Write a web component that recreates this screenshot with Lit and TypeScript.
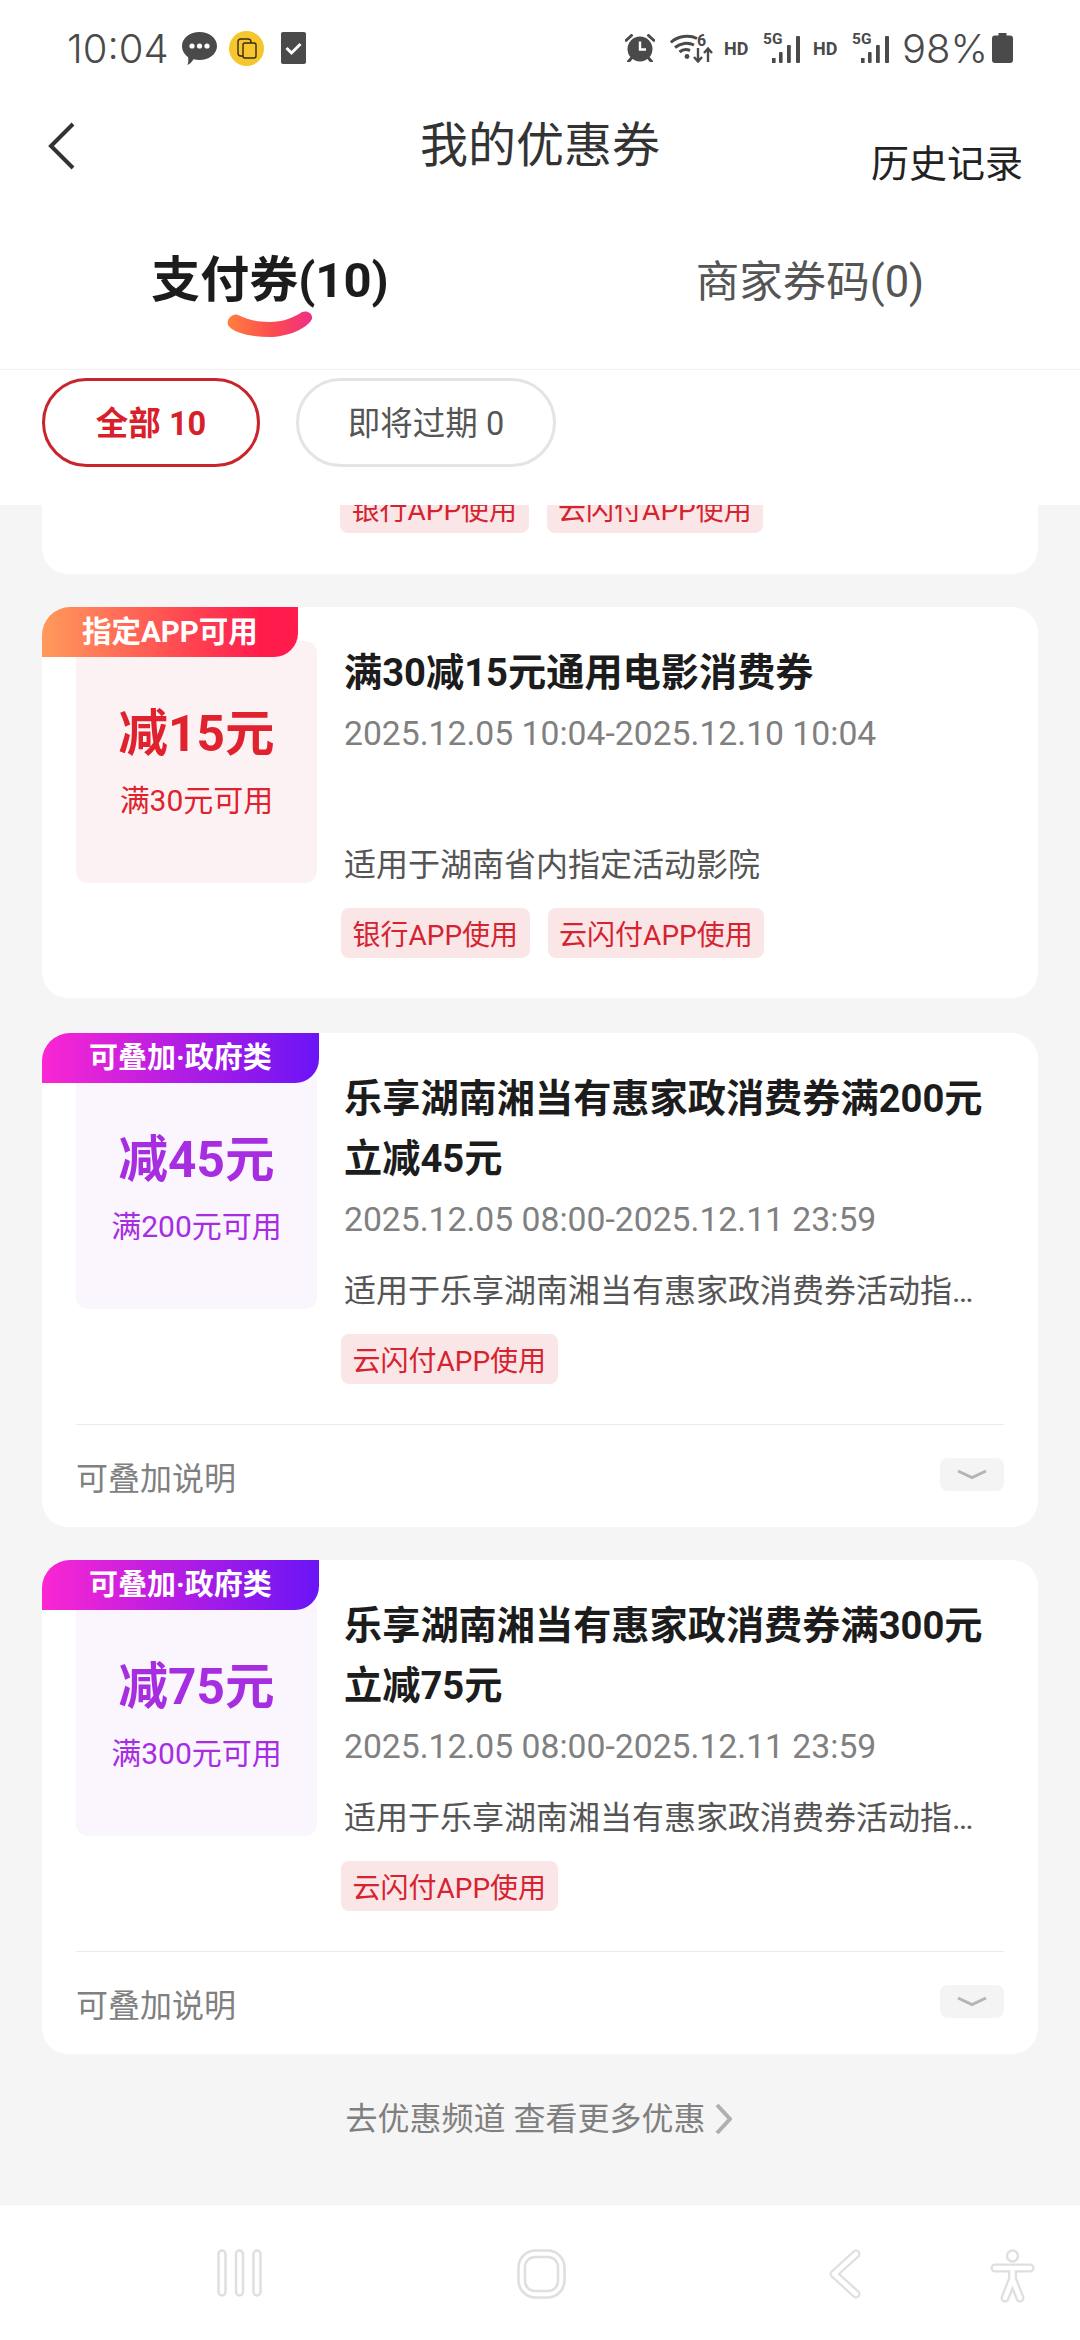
import { LitElement, html, css, svg } from "lit";
import { customElement } from "lit/decorators.js";

interface Coupon {
  badge: string;
  theme: "red" | "purple";
  amount: string;
  cond: string;
  title: string;
  date: string;
  desc: string;
  tags: string[];
  stack: boolean;
}

const DESC_GOV = "适用于乐享湖南湘当有惠家政消费券活动指定商户使用";

const COUPONS: Coupon[] = [
  { badge: "指定APP可用", theme: "red", amount: "减15元", cond: "满30元可用", title: "满30减15元通用电影消费券", date: "2025.12.05 10:04-2025.12.10 10:04", desc: "适用于湖南省内指定活动影院", tags: ["银行APP使用", "云闪付APP使用"], stack: false },
  { badge: "可叠加·政府类", theme: "purple", amount: "减45元", cond: "满200元可用", title: "乐享湖南湘当有惠家政消费券满200元立减45元", date: "2025.12.05 08:00-2025.12.11 23:59", desc: DESC_GOV, tags: ["云闪付APP使用"], stack: true },
  { badge: "可叠加·政府类", theme: "purple", amount: "减75元", cond: "满300元可用", title: "乐享湖南湘当有惠家政消费券满300元立减75元", date: "2025.12.05 08:00-2025.12.11 23:59", desc: DESC_GOV, tags: ["云闪付APP使用"], stack: true },
];

const outline = (d: string) => svg`
  <path d=${d} fill="none" stroke="#dfdfdf" stroke-width="9" stroke-linecap="round" stroke-linejoin="round"/>
  <path d=${d} fill="none" stroke="#fff" stroke-width="4.5" stroke-linecap="round" stroke-linejoin="round"/>`;

const signal = html`<svg class="sig" width="38" height="36" viewBox="0 -6 38 36">
  <text x="0" y="10.500" font-family="Roboto, sans-serif" font-weight="700" font-size="15.500" fill="#4a4a4a">5G</text>
  <rect x="9" y="25" width="3.600" height="5" fill="#4a4a4a"/>
  <rect x="16" y="19" width="3.600" height="11" rx="1" fill="#4a4a4a"/>
  <rect x="24" y="12" width="3.800" height="18" rx="1" fill="#4a4a4a"/>
  <rect x="33" y="3" width="4" height="27" rx="1" fill="#4a4a4a"/>
</svg>`;

@customElement("app-root")
export class AppRoot extends LitElement {
  static styles = css`
    :host {
      display: flex;
      flex-direction: column;
      width: 1080px;
      height: 2340px;
      overflow: hidden;
      background: #fff;
      font-family: Roboto, "Noto Sans CJK SC", sans-serif;
    }
    .status {
      height: 96px;
      flex: none;
      display: flex;
      align-items: center;
      padding: 0 67px 0 67px;
      color: #4a4a4a;
      box-sizing: border-box;
    }
    .time {
      font-family: Inter, Roboto, sans-serif;
      font-size: 40px;
      font-weight: 300;
      width: 115px;
    }
    .st-l { display: flex; align-items: center; }
    .st-l svg + svg { margin-left: 12px; }
    .st-l svg:last-child { margin-left: 17px; }
    .st-r { margin-left: auto; display: flex; align-items: center; }
    .hd { font-size: 18px; font-weight: 700; margin: 0 14px 0 11px; width: 25px; }
    .sig { margin-top: -6px; }
    .sig + .hd { margin-left: 12px; }
    .wifi { margin: -6px 0 0 15px; }
    .pct {
      font-family: Inter, Roboto, sans-serif;
      font-size: 40px;
      font-weight: 300;
      margin: 0 6px 0 12px;
      width: 84px;
      white-space: nowrap;
    }
    .header {
      height: 100px;
      flex: none;
      display: grid;
      grid-template-columns: 1fr auto 1fr;
      align-items: center;
    }
    .back { margin-left: 46px; display: block; }
    .title { font-size: 48px; line-height: 60px; color: #333; }
    .history {
      justify-self: end;
      align-self: end;
      margin: 0 57px 10px 0;
      font-size: 38px;
      line-height: 44px;
      color: #222;
    }
    .tabs {
      height: 174px;
      flex: none;
      box-sizing: border-box;
      display: grid;
      grid-template-columns: 1fr 1fr;
      border-bottom: 1px solid #f2f2f2;
    }
    .tab {
      display: flex;
      flex-direction: column;
      align-items: center;
      padding-top: 57px;
      font-size: 43.500px;
      line-height: 60px;
      color: #555;
    }
    .tab.on {
      padding-top: 55px;
      font-size: 49px;
      font-weight: 700;
      color: #1c1c1c;
    }
    .smile { display: block; }
    .filters {
      height: 135px;
      flex: none;
      box-sizing: border-box;
      padding: 8px 42px 0;
      display: flex;
      align-items: flex-start;
      gap: 36px;
      background: #fff;
      position: relative;
      z-index: 1;
    }
    .pill {
      height: 89px;
      box-sizing: border-box;
      border-radius: 45px;
      display: flex;
      align-items: center;
      justify-content: center;
      padding-bottom: 4px;
      font-size: 32.500px;
    }
    .pill.on {
      width: 218px;
      border: 3px solid #c9242c;
      color: #d8202b;
      font-weight: 700;
    }
    .pill.off {
      width: 260px;
      border: 3px solid #e4e4e4;
      color: #555;
    }
    .list {
      flex: 1;
      min-height: 0;
      overflow: hidden;
      background: #f5f5f5;
      padding: 0 42px;
      display: flex;
      flex-direction: column;
      gap: 33px;
    }
    .card {
      position: relative;
      flex: none;
      background: #fff;
      border-radius: 26px;
    }
    .card.red-card { margin-bottom: 2px; }
    .card.stub {
      height: 300px;
      margin-top: -231px;
      box-sizing: border-box;
      padding: 0 34px 41px 301px;
      display: flex;
      align-items: flex-end;
    }
    .badge {
      position: absolute;
      left: 0;
      top: 0;
      z-index: 1;
      height: 50px;
      border-radius: 28px 0 24px 0;
      color: #fff;
      font-size: 29.500px;
      font-weight: 700;
      line-height: 50px;
      white-space: nowrap;
    }
    .badge.red { padding: 0 40px; background: linear-gradient(90deg, #ff9a5c, #ff1c4c 85%); }
    .badge.purple { padding: 0 47px; font-size: 29px; background: linear-gradient(90deg, #fb26d2, #6a14f6); }
    .main {
      display: flex;
      padding: 0 34px 40px;
    }
    .box {
      flex: none;
      width: 241px;
      height: 242px;
      margin-top: 34px;
      border-radius: 12px;
      display: flex;
      flex-direction: column;
      align-items: center;
      justify-content: center;
      gap: 17px;
    }
    .box.red { background: #fdf2f3; color: #e0222e; }
    .box.purple { background: #fbf5fe; color: #a62de0; }
    .amount { font-size: 49.500px; line-height: 60px; font-weight: 700; }
    .cond { font-size: 30px; line-height: 40px; }
    .col {
      flex: 1;
      min-width: 0;
      margin-left: 27px;
      padding-top: 36px;
      height: 315px;
      display: flex;
      flex-direction: column;
    }
    .name { font-size: 38.200px; line-height: 60px; font-weight: 700; color: #1c1c1c; }
    .date { font-size: 33.700px; line-height: 44px; margin-top: 9px; color: #808080; }
    .desc {
      margin-top: auto;
      max-width: 636px;
      font-size: 32px;
      line-height: 44px;
      color: #555;
      white-space: nowrap;
      overflow: hidden;
      text-overflow: ellipsis;
    }
    .tags { display: flex; gap: 18px; margin: 21px 0 0 -3px; }
    .tag {
      height: 50px;
      padding: 0 11.500px;
      border-radius: 8px;
      background: #fbe6e7;
      color: #d5232f;
      font-size: 28px;
      line-height: 56px;
      white-space: nowrap;
    }
    .foot {
      margin: 0 34px;
      height: 103px;
      box-sizing: border-box;
      border-top: 1px solid #ebebeb;
      display: flex;
      align-items: center;
      justify-content: space-between;
      font-size: 32px;
      color: #808080;
    }
    .more {
      width: 64px;
      height: 33px;
      margin-bottom: 3px;
      border-radius: 8px;
      background: #f4f4f4;
      display: flex;
      align-items: center;
      justify-content: center;
    }
    .link {
      margin-top: 10px;
      display: flex;
      align-items: center;
      justify-content: center;
      gap: 10px;
      padding-right: 2px;
      font-size: 32px;
      line-height: 44px;
      color: #808080;
    }
    .nav {
      height: 136px;
      flex: none;
      box-sizing: border-box;
      padding: 44px 0 0 217px;
      border-top: 1px solid #f2f2f2;
      display: flex;
      align-items: flex-start;
      background: #fff;
    }
    .nav svg { display: block; flex: none; }
    .nav .home { margin-left: 255px; }
    .nav .bk { margin-left: 262px; }
    .nav .acc { margin-left: 129px; }
  `;

  private card(c: Coupon) {
    return html`<div class="card ${c.stack ? "" : "red-card"}">
      <div class="badge ${c.theme}">${c.badge}</div>
      <div class="main">
        <div class="box ${c.theme}">
          <div class="amount">${c.amount}</div>
          <div class="cond">${c.cond}</div>
        </div>
        <div class="col">
          <div class="name">${c.title}</div>
          <div class="date">${c.date}</div>
          <div class="desc">${c.desc}</div>
          <div class="tags">${c.tags.map((t) => html`<span class="tag">${t}</span>`)}</div>
        </div>
      </div>
      ${c.stack
        ? html`<div class="foot">
            <span>可叠加说明</span>
            <span class="more"><svg width="30" height="12" viewBox="0 0 30 12"><path d="M1 2 L15 8.5 L29 2" fill="none" stroke="#b5b5b5" stroke-width="3"/></svg></span>
          </div>`
        : ""}
    </div>`;
  }

  render() {
    return html`
      <div class="status">
        <span class="time">10:04</span>
        <div class="st-l">
          <svg width="35" height="33" viewBox="0 0 35 33">
            <path d="M17.5 0C27 0 35 6 35 14s-8 14-17.5 14c-2 0-4-.3-6-.8C10 29.500 8 32 5.500 33c1-2.500 1-5.500.5-8C2.300 22.500 0 18.500 0 14 0 6 8 0 17.500 0Z" fill="#4a4a4a"/>
            <circle cx="10" cy="14" r="2.600" fill="#fff"/><circle cx="17.500" cy="14" r="2.600" fill="#fff"/><circle cx="25" cy="14" r="2.600" fill="#fff"/>
          </svg>
          <svg width="35" height="35" viewBox="0 0 35 35">
            <circle cx="17.500" cy="17.500" r="17.500" fill="#f5c62e"/>
            <path d="M14 25h-2a3 3 0 0 1-3-3V11a3 3 0 0 1 3-3h7a3 3 0 0 1 3 3v1" fill="none" stroke="#3a2a10" stroke-width="1.400"/>
            <rect x="14" y="12" width="13" height="15" rx="2" fill="none" stroke="#3a2a10" stroke-width="1.400"/>
          </svg>
          <svg width="25" height="32" viewBox="0 0 25 32">
            <rect width="25" height="32" rx="2" fill="#4a4a4a"/>
            <path d="M5.500 16 L10.500 21 L19.500 12" fill="none" stroke="#fff" stroke-width="3"/>
          </svg>
        </div>
        <div class="st-r">
          <svg width="30" height="28" viewBox="0 0 30 28">
            <circle cx="15" cy="15" r="12.500" fill="#4a4a4a"/>
            <path d="M15 7.500V15.500H21" fill="none" stroke="#fff" stroke-width="2.400"/>
            <path d="M1 6.500 L6.500 1.500 M29 6.500 L23.500 1.500" stroke="#4a4a4a" stroke-width="3" stroke-linecap="round"/>
            <path d="M6.500 24 L3.500 27.500 M23.500 24 L26.500 27.500" stroke="#4a4a4a" stroke-width="3" stroke-linecap="round"/>
          </svg>
          <svg class="wifi" width="43" height="36" viewBox="0 -6 43 36">
            <path d="M0.800 9.500C8 3 19 1.500 27 5.500M5 14.500C10.500 10 18 9 24 12M9.500 19C12.500 16.500 16.500 16 20 17.500" fill="none" stroke="#4a4a4a" stroke-width="3"/>
            <circle cx="17" cy="23.500" r="2.400" fill="#4a4a4a"/>
            <text x="27" y="13" font-family="Roboto, sans-serif" font-weight="700" font-size="16" fill="#4a4a4a">6</text>
            <path d="M28 15V28M24 24L28 28.500L32 24" fill="none" stroke="#4a4a4a" stroke-width="2.400"/>
            <path d="M38 29V16M34 20L38 15.500L42 20" fill="none" stroke="#4a4a4a" stroke-width="2.400"/>
          </svg>
          <span class="hd">HD</span>
          ${signal}
          <span class="hd">HD</span>
          ${signal}
          <span class="pct">98%</span>
          <svg width="21" height="30" viewBox="0 0 21 30">
            <path d="M6.500 0h8v2.500H18a3 3 0 0 1 3 3V27a3 3 0 0 1-3 3H3a3 3 0 0 1-3-3V5.500a3 3 0 0 1 3-3h3.500Z" fill="#4a4a4a"/>
          </svg>
        </div>
      </div>

      <div class="header">
        <svg class="back" width="30" height="48" viewBox="0 0 30 48">
          <path d="M27 2 L5 24 L27 46" fill="none" stroke="#333" stroke-width="4"/>
        </svg>
        <div class="title">我的优惠券</div>
        <div class="history">历史记录</div>
      </div>

      <div class="tabs">
        <div class="tab on">
          <span>支付券(10)</span>
          <svg class="smile" width="86" height="26" viewBox="0 0 86 26">
            <defs><linearGradient id="sm" x1="0" x2="1" y1="0.300" y2="0.300"><stop offset="0" stop-color="#ff7f3e"/><stop offset="0.550" stop-color="#fb4a50"/><stop offset="1" stop-color="#f02f85"/></linearGradient></defs>
            <path d="M1 14C-1 8 6 2 11 4C22 9 30 11 42 11C56 11 66 7 75 1C80-1 86 2 85 8C80 18 60 26 42 26C26 26 5 22 1 14Z" fill="url(#sm)"/>
          </svg>
        </div>
        <div class="tab">商家券码(0)</div>
      </div>

      <div class="filters">
        <div class="pill on">全部 10</div>
        <div class="pill off">即将过期 0</div>
      </div>

      <div class="list">
        <div class="card stub">
          <div class="tags">
            <span class="tag">银行APP使用</span>
            <span class="tag">云闪付APP使用</span>
          </div>
        </div>
        ${COUPONS.map((c) => this.card(c))}
        <div class="link">
          <span>去优惠频道 查看更多优惠</span>
          <svg width="17" height="30" viewBox="0 0 17 30"><path d="M2 1 L15 15 L2 29" fill="none" stroke="#b0b0b0" stroke-width="4"/></svg>
        </div>
      </div>

      <div class="nav">
        <svg width="45" height="48" viewBox="0 0 45 48">
          <g fill="none" stroke="#dfdfdf" stroke-width="2.400">
            <rect x="1.500" y="1.500" width="7" height="45" rx="3.500"/>
            <rect x="19" y="1.500" width="7" height="45" rx="3.500"/>
            <rect x="36.500" y="1.500" width="7" height="45" rx="3.500"/>
          </g>
        </svg>
        <svg class="home" width="49" height="50" viewBox="0 0 49 50">
          <g fill="none" stroke="#dfdfdf" stroke-width="2.600">
            <rect x="1.500" y="1.500" width="46" height="47" rx="17"/>
            <rect x="8" y="8" width="33" height="34" rx="10"/>
          </g>
        </svg>
        <svg class="bk" width="33" height="50" viewBox="0 0 33 50">${outline("M28 5 L6 25 L28 45")}</svg>
        <svg class="acc" width="45" height="54" viewBox="0 0 45 54">
          <circle cx="22.500" cy="7" r="5.500" fill="none" stroke="#dfdfdf" stroke-width="2.400"/>
          ${outline("M5 19 L40 19 M22.500 19 L22.500 30 M22.500 30 L15 49 M22.500 30 L30 49")}
        </svg>
      </div>
    `;
  }
}
